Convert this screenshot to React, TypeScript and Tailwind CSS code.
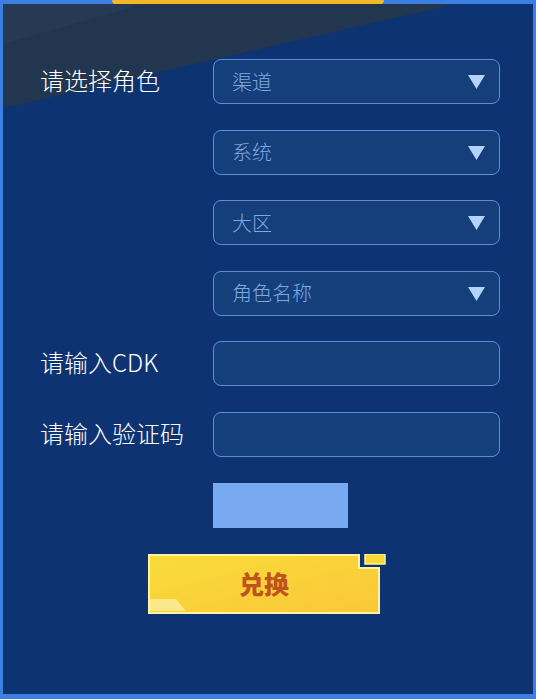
import React from "react";

const font = { fontFamily: '"Noto Sans CJK SC", "Noto Sans", sans-serif' };

function Arrow() {
  return (
    <svg width="17" height="15" viewBox="0 0 17 15" className="shrink-0">
      <polygon points="0,1 17,1 8.5,15" fill="#b3d3fa" />
    </svg>
  );
}

function Select({ text }: { text: string }) {
  return (
    <div className="flex h-[45px] w-[287px] items-center justify-between rounded-[8px] border-[1.5px] border-[#5e8fd6] bg-[#153f7b] pl-[18px] pr-[14px]">
      <span className="text-[20px] font-light leading-none text-[#80a8e0]">{text}</span>
      <Arrow />
    </div>
  );
}

function Input() {
  return <div className="h-[45px] w-[287px] rounded-[8px] border-[1.5px] border-[#5e8fd6] bg-[#153f7b]" />;
}

function Row({ label, children }: { label?: string; children: React.ReactNode }) {
  return (
    <div className="flex items-center">
      <div className="mt-[-3px] w-[173px] text-[24px] font-light leading-none text-white">{label}</div>
      {children}
    </div>
  );
}

export default function App() {
  return (
    <div className="relative h-[699px] w-[536px] bg-[#3b7fe0] pb-[5px] pl-[3px] pr-[3px] pt-[4px]" style={font}>
      <div className="absolute left-[112px] top-0 h-[5px] w-[272px] rounded-b-full bg-[#f2b826]" />
      <div className="relative h-full w-full overflow-hidden bg-[#0e3372]">
        <svg className="absolute left-0 top-0" width="530" height="120" viewBox="0 0 530 120">
          <polygon points="0,0 452,0 0,104" fill="#23364f" />
          <polygon points="0,0 140,0 0,40" fill="#2a3d5a" opacity="0.6" />
        </svg>
        <div className="relative flex flex-col gap-[25.6px] pl-[37px] pt-[55px]">
          <Row label="请选择角色">
            <Select text="渠道" />
          </Row>
          <Row>
            <Select text="系统" />
          </Row>
          <Row>
            <Select text="大区" />
          </Row>
          <Row>
            <Select text="角色名称" />
          </Row>
          <Row label="请输入CDK">
            <Input />
          </Row>
          <Row label="请输入验证码">
            <Input />
          </Row>
          <Row>
            <div className="h-[45px] w-[135px] bg-[#79a9f1]" />
          </Row>
        </div>
        <div className="relative ml-[145px] mt-[26px] h-[60px] w-[240px]">
          <svg width="240" height="60" viewBox="0 0 240 60" className="absolute left-0 top-0">
            <defs>
              <linearGradient id="g" x1="0" y1="0" x2="1" y2="1">
                <stop offset="0" stopColor="#f8dc3a" />
                <stop offset="1" stopColor="#fbc738" />
              </linearGradient>
            </defs>
            <polygon
              points="1,1 211,1 211,14 231,14 231,59 1,59"
              fill="url(#g)"
              stroke="#fff3a0"
              strokeWidth="2"
            />
            <polygon points="2,45 28,45 38,57 2,57" fill="#fbe88a" />
            <rect x="217" y="0" width="20" height="10" fill="#f9d838" stroke="#fff3a0" strokeWidth="1.5" />
          </svg>
          <div className="absolute left-0 top-0 flex h-[60px] w-[232px] items-center justify-center text-[25px] font-black leading-none text-[#c0521b]">
            兑换
          </div>
        </div>
      </div>
    </div>
  );
}
